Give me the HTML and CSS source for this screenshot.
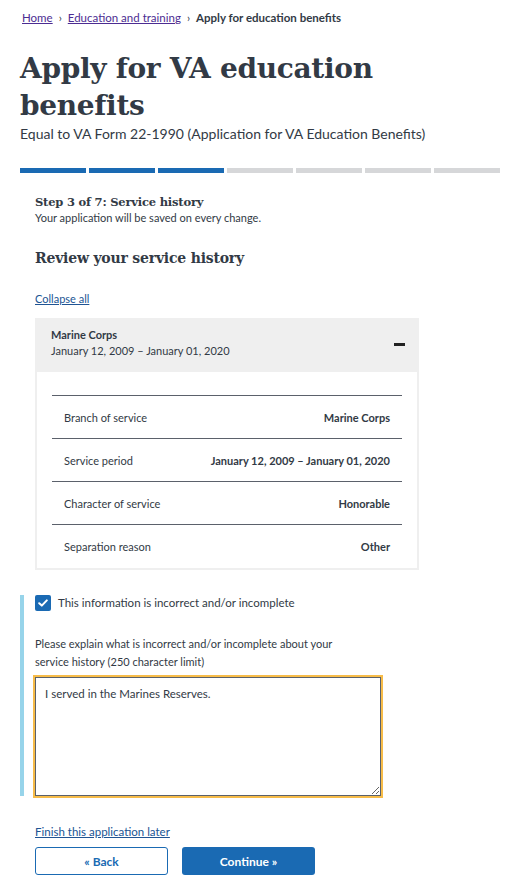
FILE: index.html
```
<!DOCTYPE html>
<html lang="en">
<head>
<meta charset="utf-8">
<title>Apply for VA education benefits</title>
<link rel="stylesheet" href="styles.css">
</head>
<body>
<div class="page">
  <nav class="breadcrumbs">
    <a href="#">Home</a><span class="sep">›</span><a href="#">Education and training</a><span class="sep">›</span><span class="current">Apply for education benefits</span>
  </nav>
  <h1 class="title">Apply for VA education benefits</h1>
  <p class="subtitle">Equal to VA Form 22-1990 (Application for VA Education Benefits)</p>
  <div class="progress">
    <span class="seg done"></span><span class="seg done"></span><span class="seg done"></span><span class="seg"></span><span class="seg"></span><span class="seg"></span><span class="seg"></span>
  </div>
  <div class="form">
    <h2 class="step">Step 3 of 7: Service history</h2>
    <p class="saved">Your application will be saved on every change.</p>
    <h3 class="review">Review your service history</h3>
    <a href="#" class="collapse">Collapse all</a>
    <div class="accordion">
      <div class="acc-head">
        <div>
          <div class="acc-title">Marine Corps</div>
          <div class="acc-sub">January 12, 2009 – January 01, 2020</div>
        </div>
        <span class="minus"></span>
      </div>
      <div class="acc-body">
        <div class="row"><span>Branch of service</span><strong>Marine Corps</strong></div>
        <div class="row"><span>Service period</span><strong>January 12, 2009 – January 01, 2020</strong></div>
        <div class="row"><span>Character of service</span><strong>Honorable</strong></div>
        <div class="row"><span>Separation reason</span><strong>Other</strong></div>
      </div>
    </div>
  </div>
  <div class="flag">
    <label class="check">
      <span class="box"><svg width="10" height="8" viewBox="0 0 10 8"><path d="M1.2 4.2 L3.8 6.6 L8.8 1.4" fill="none" stroke="#fff" stroke-width="2" stroke-linecap="round" stroke-linejoin="round"/></svg></span>
      <span>This information is incorrect and/or incomplete</span>
    </label>
    <label class="explain" for="why">Please explain what is incorrect and/or incomplete about your service history (250 character limit)</label>
    <textarea id="why" class="why">I served in the Marines Reserves.</textarea>
  </div>
  <div class="form footer">
    <a href="#" class="later">Finish this application later</a>
    <div class="buttons">
      <button class="btn back">« Back</button>
      <button class="btn next">Continue »</button>
    </div>
  </div>
</div>
</body>
</html>
```
FILE: styles.css
```
* { box-sizing: border-box; }
html, body { margin: 0; padding: 0; background: #fff; }
body {
  font-family: Lato, "Open Sans", sans-serif;
  color: #323a45;
}
.page { padding: 10px 12px 0 20px; }

.breadcrumbs { font-size: 11.5px; line-height: 16px; padding-left: 2px; }
.breadcrumbs a { color: #4c2c92; text-decoration: underline; }
.breadcrumbs .sep { margin: 0 6px; font-size: 11px; }
.breadcrumbs .current { font-weight: 700; }

.title {
  font-family: "DejaVu Serif", serif;
  font-weight: 700;
  font-size: 28px;
  line-height: 37px;
  margin: 24px 0 0;
  width: 400px;
  letter-spacing: -0.3px;
}
.subtitle { font-size: 14px; line-height: 20px; margin: 0; }

.progress {
  display: grid;
  grid-template-columns: repeat(7, 1fr);
  gap: 3px;
  margin-top: 24px;
  height: 5px;
}
.seg { background: #d6d7d9; }
.seg.done { background: #1a6ab3; }

.form { padding-left: 15px; padding-right: 81px; }
.step {
  font-family: "DejaVu Serif", serif;
  font-size: 11.5px;
  letter-spacing: -0.2px;
  line-height: 16px;
  margin: 21px 0 0;
}
.saved { font-size: 11px; line-height: 16px; margin: 0; }
.review {
  font-family: "DejaVu Serif", serif;
  font-size: 14px;
  letter-spacing: -0.2px;
  line-height: 20px;
  margin: 22px 0 0;
}
.collapse {
  display: inline-block;
  margin-top: 23px;
  font-size: 11px;
  line-height: 16px;
  color: #205493;
}

.accordion { margin-top: 11px; width: 384px; }
.acc-head {
  background: #efefef;
  height: 54px;
  padding: 9px 14px 0 16px;
  display: flex;
  justify-content: space-between;
  align-items: flex-start;
}
.acc-title { font-size: 11px; font-weight: 700; line-height: 16px; }
.acc-sub { font-size: 11px; line-height: 16px; }
.minus { width: 11px; height: 3px; background: #212121; margin-top: 16px; }
.acc-body {
  border: 2px solid #efefef;
  border-top: 0;
  padding: 23px 15px 1px;
}
.row {
  display: flex;
  justify-content: space-between;
  align-items: center;
  height: 43px;
  border-top: 1px solid #5b616b;
  padding: 0 12px;
  font-size: 11px;
}
.row strong { font-weight: 700; }

.flag {
  margin-top: 25px;
  border-left: 4px solid #97d4ea;
  padding-left: 11px;
}
.check { display: flex; align-items: center; gap: 7px; font-size: 11.5px; line-height: 16px; }
.box {
  width: 16px; height: 16px;
  background: #1a6ab3;
  border-radius: 2px;
  display: flex; align-items: center; justify-content: center;
}
.explain {
  display: block;
  margin-top: 24px;
  font-size: 11px;
  line-height: 18px;
  width: 320px;
}
.why {
  display: block;
  margin: 6px 0 0;
  width: 346px;
  height: 119px;
  border: 1px solid #5b616b;
  outline: 2px solid #f7bc49;
  outline-offset: 0;
  padding: 8px 9px;
  font-family: Lato, "Open Sans", sans-serif;
  font-size: 11.5px;
  line-height: 16px;
  color: #323a45;
  resize: vertical;
}

.footer { margin-top: 24px; }
.later { font-size: 11.5px; line-height: 16px; color: #205493; }
.buttons { display: flex; gap: 14px; margin-top: 7px; }
.btn {
  width: 133px;
  height: 28px;
  border-radius: 3px;
  font-family: Lato, "Open Sans", sans-serif;
  font-size: 12px;
  font-weight: 700;
}
.back { background: #fff; border: 1.5px solid #1a6ab3; color: #1a6ab3; }
.next { background: #1a6ab3; border: 0; color: #fff; }
```
